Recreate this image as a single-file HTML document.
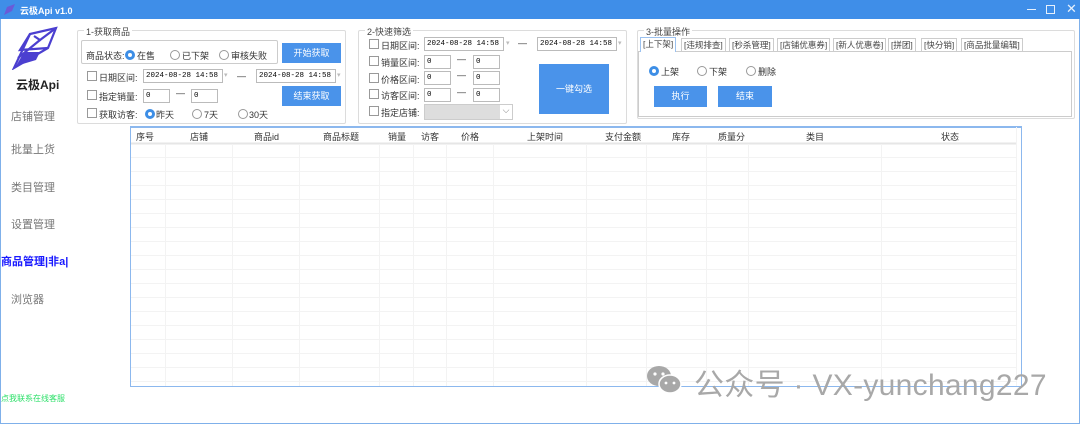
<!DOCTYPE html><html><head><meta charset="utf-8"><style>
*{margin:0;padding:0;box-sizing:border-box}
body{width:1080px;height:424px;overflow:hidden;background:#fff;font-family:"Liberation Sans","Noto Sans CJK SC",sans-serif;font-size:9px;color:#333;position:relative}
.a{position:absolute;white-space:nowrap}
.grp{position:absolute;border:1px solid #dcdcdc;border-radius:2px}
.gt{position:absolute;top:-6px;left:6px;background:#fff;padding:0 2px;font-size:9px;color:#444}
.cb{position:absolute;width:10px;height:10px;border:1px solid #999;background:#fff}
.rb{position:absolute;width:10px;height:10px;border:1px solid #999;border-radius:50%;background:#fff}
.rb.on{border:3px solid #3d8ee6}
.in{position:absolute;height:14px;border:1px solid #bbb;background:#fff;font-family:"Liberation Mono",monospace;font-size:7.5px;line-height:12px;padding-left:2px;color:#000;white-space:nowrap;overflow:hidden}
.btn{position:absolute;background:#4a93ea;color:#fff;text-align:center;font-size:9px}
.nav{position:absolute;left:11px;font-size:11px;color:#777}
.tab{position:absolute;top:38px;height:13px;border:1px solid #ccc;border-bottom:none;font-size:8.5px;line-height:12px;padding:0 2px;color:#444;background:#fff}
</style></head><body>
<div class="a" style="left:0;top:0;width:1080px;height:19px;background:#3f8ee8"></div>
<svg class="a" style="left:3px;top:3px" width="13" height="13" viewBox="0 0 13 13"><path d="M1 12 L4 4 L12 1 L9 8 Z" fill="#6a5ad8"/></svg>
<div class="a" style="left:20px;top:4px;color:#fff;font-size:9px;font-weight:bold">云极Api v1.0</div>
<div class="a" style="left:1027px;top:9px;width:9px;height:1px;background:#e6f0fc"></div>
<div class="a" style="left:1046px;top:5px;width:9px;height:9px;border:1px solid #e6f0fc"></div>
<div class="a" style="left:1066px;top:1px;color:#e6f0fc;font-size:13px">✕</div>
<div class="a" style="left:0;top:19px;width:1px;height:405px;background:#7fb0ea"></div>
<div class="a" style="right:0;top:19px;width:1px;height:405px;background:#7fb0ea"></div>
<div class="a" style="left:0;bottom:0;width:1080px;height:1px;background:#7fb0ea"></div>
<svg class="a" style="left:10px;top:24px" width="50" height="46" viewBox="0 0 50 46"><g fill="none" stroke="#4b3fd0" stroke-width="2.2"><path d="M4 44 L20 10 L46 4 L38 24 Z"/><path d="M20 10 L10 26 L38 24"/><path d="M46 4 L30 16 L24 12"/><path d="M8 34 L30 16"/></g><path d="M6 42 L14 28 L30 28 L26 36 Z" fill="#4b3fd0"/></svg>
<div class="a" style="left:16px;top:76px;font-size:12px;font-weight:bold;color:#222">云极Api</div>
<div class="nav" style="top:108px">店铺管理</div>
<div class="nav" style="top:141px">批量上货</div>
<div class="nav" style="top:179px">类目管理</div>
<div class="nav" style="top:216px">设置管理</div>
<div class="a" style="left:1px;top:253px;font-size:11px;font-weight:bold;color:#1a1aff">商品管理|非a|</div>
<div class="nav" style="top:291px">浏览器</div>
<div class="a" style="left:1px;top:393px;font-size:8px;color:#2ee06a">点我联系在线客服</div>
<div class="grp" style="left:77px;top:30px;width:269px;height:94px"><div class="gt">1-获取商品</div></div>
<div class="a" style="left:81px;top:40px;width:197px;height:24px;border:1px solid #ccc;border-radius:2px"></div>
<div class="a" style="left:86px;top:49px">商品状态:</div>
<div class="rb on" style="left:125px;top:50px"></div><div class="a" style="left:137px;top:49px">在售</div>
<div class="rb" style="left:170px;top:50px"></div><div class="a" style="left:182px;top:49px">已下架</div>
<div class="rb" style="left:219px;top:50px"></div><div class="a" style="left:231px;top:49px">审核失败</div>
<div class="btn" style="left:282px;top:43px;width:59px;height:20px;line-height:20px">开始获取</div>
<div class="cb" style="left:87px;top:71px"></div><div class="a" style="left:99px;top:71px">日期区间:</div>
<div class="in" style="left:143px;top:69px;width:80px">2024-08-28 14:58</div><div class="a" style="left:224px;top:71px;color:#bbb;font-size:7px">▾</div>
<div class="a" style="left:237px;top:71px">—</div>
<div class="in" style="left:256px;top:69px;width:80px">2024-08-28 14:58</div><div class="a" style="left:337px;top:71px;color:#bbb;font-size:7px">▾</div>
<div class="cb" style="left:87px;top:90px"></div><div class="a" style="left:99px;top:90px">指定销量:</div>
<div class="in" style="left:143px;top:89px;width:27px">0</div><div class="a" style="left:176px;top:88px">—</div>
<div class="in" style="left:191px;top:89px;width:27px">0</div>
<div class="btn" style="left:282px;top:86px;width:59px;height:20px;line-height:20px">结束获取</div>
<div class="cb" style="left:87px;top:108px"></div><div class="a" style="left:99px;top:108px">获取访客:</div>
<div class="rb on" style="left:145px;top:109px"></div><div class="a" style="left:156px;top:108px">昨天</div>
<div class="rb" style="left:192px;top:109px"></div><div class="a" style="left:204px;top:108px">7天</div>
<div class="rb" style="left:238px;top:109px"></div><div class="a" style="left:249px;top:108px">30天</div>
<div class="grp" style="left:358px;top:30px;width:269px;height:94px"><div class="gt">2-快速筛选</div></div>
<div class="cb" style="left:369px;top:39px"></div><div class="a" style="left:381px;top:39px">日期区间:</div>
<div class="in" style="left:424px;top:37px;width:80px">2024-08-28 14:58</div><div class="a" style="left:506px;top:39px;color:#bbb;font-size:7px">▾</div>
<div class="a" style="left:518px;top:38px">—</div>
<div class="in" style="left:537px;top:37px;width:80px">2024-08-28 14:58</div><div class="a" style="left:618px;top:39px;color:#bbb;font-size:7px">▾</div>
<div class="cb" style="left:369px;top:56px"></div><div class="a" style="left:381px;top:56px">销量区间:</div>
<div class="in" style="left:424px;top:55px;width:27px">0</div><div class="a" style="left:457px;top:54px">—</div><div class="in" style="left:473px;top:55px;width:27px">0</div>
<div class="cb" style="left:369px;top:73px"></div><div class="a" style="left:381px;top:73px">价格区间:</div>
<div class="in" style="left:424px;top:71px;width:27px">0</div><div class="a" style="left:457px;top:70px">—</div><div class="in" style="left:473px;top:71px;width:27px">0</div>
<div class="cb" style="left:369px;top:89px"></div><div class="a" style="left:381px;top:89px">访客区间:</div>
<div class="in" style="left:424px;top:88px;width:27px">0</div><div class="a" style="left:457px;top:87px">—</div><div class="in" style="left:473px;top:88px;width:27px">0</div>
<div class="cb" style="left:369px;top:106px"></div><div class="a" style="left:381px;top:106px">指定店铺:</div>
<div class="a" style="left:424px;top:104px;width:89px;height:16px;border:1px solid #ccc;background:#ddd"></div>
<div class="a" style="left:500px;top:104px;width:13px;height:16px;background:#fff;color:#777;font-size:9px;text-align:center;border:1px solid #ccc;border-left:none">⌵</div>
<div class="btn" style="left:539px;top:64px;width:70px;height:50px;line-height:50px">一键勾选</div>
<div class="grp" style="left:637px;top:30px;width:438px;height:89px"><div class="gt">3-批量操作</div></div>
<div class="a" style="left:638px;top:51px;width:434px;height:66px;border:1px solid #ccc"></div>
<div class="tab" style="left:640px;top:37px;height:15px;border-color:#9cc2f0">[上下架]</div>
<div class="tab" style="left:681px">[违规排查]</div>
<div class="tab" style="left:729px">[秒杀管理]</div>
<div class="tab" style="left:777px">[店铺优惠券]</div>
<div class="tab" style="left:833px">[新人优惠卷]</div>
<div class="tab" style="left:888px">[拼团]</div>
<div class="tab" style="left:921px">[快分销]</div>
<div class="tab" style="left:961px">[商品批量编辑]</div>
<div class="rb on" style="left:649px;top:66px"></div><div class="a" style="left:661px;top:65px">上架</div>
<div class="rb" style="left:697px;top:66px"></div><div class="a" style="left:709px;top:65px">下架</div>
<div class="rb" style="left:746px;top:66px"></div><div class="a" style="left:758px;top:65px">删除</div>
<div class="btn" style="left:654px;top:86px;width:53px;height:21px;line-height:21px">执行</div>
<div class="btn" style="left:718px;top:86px;width:54px;height:21px;line-height:21px">结束</div>
<svg class="a" style="left:130px;top:126px" width="892" height="261">
<rect x="0.5" y="0.5" width="891" height="260" fill="#fff" stroke="#8cb8ee"/>
<rect x="1" y="1" width="890" height="1" fill="#8cb8ee"/>
<line x1="1" y1="17.5" x2="887" y2="17.5" stroke="#e6e6e6" stroke-width="2"/>
<g stroke="#f3f3f3">
<line x1="1" y1="31.5" x2="887" y2="31.5"/><line x1="1" y1="45.5" x2="887" y2="45.5"/><line x1="1" y1="59.5" x2="887" y2="59.5"/><line x1="1" y1="73.5" x2="887" y2="73.5"/><line x1="1" y1="87.5" x2="887" y2="87.5"/><line x1="1" y1="101.5" x2="887" y2="101.5"/><line x1="1" y1="115.5" x2="887" y2="115.5"/><line x1="1" y1="129.5" x2="887" y2="129.5"/><line x1="1" y1="143.5" x2="887" y2="143.5"/><line x1="1" y1="157.5" x2="887" y2="157.5"/><line x1="1" y1="171.5" x2="887" y2="171.5"/><line x1="1" y1="185.5" x2="887" y2="185.5"/><line x1="1" y1="199.5" x2="887" y2="199.5"/><line x1="1" y1="213.5" x2="887" y2="213.5"/><line x1="1" y1="227.5" x2="887" y2="227.5"/><line x1="1" y1="241.5" x2="887" y2="241.5"/><line x1="1" y1="255.5" x2="887" y2="255.5"/>
<line x1="35.5" y1="18" x2="35.5" y2="260"/><line x1="102.5" y1="18" x2="102.5" y2="260"/><line x1="169.5" y1="18" x2="169.5" y2="260"/><line x1="249.5" y1="18" x2="249.5" y2="260"/><line x1="283.5" y1="18" x2="283.5" y2="260"/><line x1="316.5" y1="18" x2="316.5" y2="260"/><line x1="363.5" y1="18" x2="363.5" y2="260"/><line x1="456.5" y1="18" x2="456.5" y2="260"/><line x1="516.5" y1="18" x2="516.5" y2="260"/><line x1="576.5" y1="18" x2="576.5" y2="260"/><line x1="618.5" y1="18" x2="618.5" y2="260"/><line x1="751.5" y1="18" x2="751.5" y2="260"/><line x1="886.5" y1="1" x2="886.5" y2="260"/>
</g></svg>
<div class="a" style="left:136px;top:130px">序号</div><div class="a" style="left:190px;top:130px">店铺</div><div class="a" style="left:254px;top:130px">商品id</div><div class="a" style="left:323px;top:130px">商品标题</div><div class="a" style="left:388px;top:130px">销量</div><div class="a" style="left:421px;top:130px">访客</div><div class="a" style="left:461px;top:130px">价格</div><div class="a" style="left:527px;top:130px">上架时间</div><div class="a" style="left:605px;top:130px">支付金额</div><div class="a" style="left:672px;top:130px">库存</div><div class="a" style="left:718px;top:130px">质量分</div><div class="a" style="left:806px;top:130px">类目</div><div class="a" style="left:941px;top:130px">状态</div>
<svg class="a" style="left:645px;top:364px" width="40" height="32" viewBox="0 0 40 32"><ellipse cx="14" cy="12" rx="12" ry="10" fill="#a8a8a8"/><ellipse cx="25" cy="20" rx="11" ry="9" fill="#a8a8a8" stroke="#fff" stroke-width="1.5"/><circle cx="10" cy="10" r="1.6" fill="#fff"/><circle cx="18" cy="10" r="1.6" fill="#fff"/><circle cx="21" cy="19" r="1.4" fill="#fff"/><circle cx="29" cy="19" r="1.4" fill="#fff"/></svg>
<div class="a" style="left:694px;top:360px;font-size:30px;color:#a8a8a8;letter-spacing:0.3px">公众号 · VX-yunchang227</div>
</body></html>
